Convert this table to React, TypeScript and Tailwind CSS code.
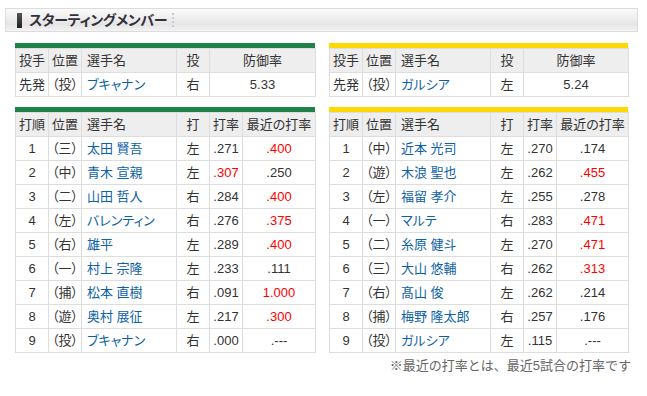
import React from "react";

type Batter = { no: number; pos: string; name: string; hand: string; avg: string; recent: string; avgRed?: boolean; recentRed?: boolean };
type Pitcher = { role: string; pos: string; name: string; hand: string; era: string };

const homePitcher: Pitcher = { role: "先発", pos: "（投）", name: "ブキャナン", hand: "右", era: "5.33" };
const awayPitcher: Pitcher = { role: "先発", pos: "（投）", name: "ガルシア", hand: "左", era: "5.24" };

const homeBatters: Batter[] = [
  { no: 1, pos: "（三）", name: "太田 賢吾", hand: "左", avg: ".271", recent: ".400", recentRed: true },
  { no: 2, pos: "（中）", name: "青木 宣親", hand: "左", avg: ".307", recent: ".250", avgRed: true },
  { no: 3, pos: "（二）", name: "山田 哲人", hand: "右", avg: ".284", recent: ".400", recentRed: true },
  { no: 4, pos: "（左）", name: "バレンティン", hand: "右", avg: ".276", recent: ".375", recentRed: true },
  { no: 5, pos: "（右）", name: "雄平", hand: "左", avg: ".289", recent: ".400", recentRed: true },
  { no: 6, pos: "（一）", name: "村上 宗隆", hand: "左", avg: ".233", recent: ".111" },
  { no: 7, pos: "（捕）", name: "松本 直樹", hand: "右", avg: ".091", recent: "1.000", recentRed: true },
  { no: 8, pos: "（遊）", name: "奥村 展征", hand: "左", avg: ".217", recent: ".300", recentRed: true },
  { no: 9, pos: "（投）", name: "ブキャナン", hand: "右", avg: ".000", recent: ".---" },
];

const awayBatters: Batter[] = [
  { no: 1, pos: "（中）", name: "近本 光司", hand: "左", avg: ".270", recent: ".174" },
  { no: 2, pos: "（遊）", name: "木浪 聖也", hand: "左", avg: ".262", recent: ".455", recentRed: true },
  { no: 3, pos: "（左）", name: "福留 孝介", hand: "左", avg: ".255", recent: ".278" },
  { no: 4, pos: "（一）", name: "マルテ", hand: "右", avg: ".283", recent: ".471", recentRed: true },
  { no: 5, pos: "（二）", name: "糸原 健斗", hand: "左", avg: ".270", recent: ".471", recentRed: true },
  { no: 6, pos: "（三）", name: "大山 悠輔", hand: "右", avg: ".262", recent: ".313", recentRed: true },
  { no: 7, pos: "（右）", name: "髙山 俊", hand: "左", avg: ".262", recent: ".214" },
  { no: 8, pos: "（捕）", name: "梅野 隆太郎", hand: "右", avg: ".257", recent: ".176" },
  { no: 9, pos: "（投）", name: "ガルシア", hand: "左", avg: ".115", recent: ".---" },
];

const th = "h-[24px] border border-[#dddddd] bg-[#eeeeee] font-normal text-center p-0";
const td = "h-[24px] border border-[#dddddd] text-center p-0";

function PitcherTable({ p, bar, last }: { p: Pitcher; bar: string; last: number }) {
  return (
    <div>
      <div className={`h-[5px] ${bar}`} />
      <table className="table-fixed border-collapse w-full">
        <colgroup>
          <col className="w-[33px]" />
          <col className="w-[33px]" />
          <col className="w-[95px]" />
          <col className="w-[33px]" />
          <col style={{ width: last }} />
        </colgroup>
        <thead>
          <tr>
            <th className={th}>投手</th>
            <th className={th}>位置</th>
            <th className={`${th} !text-left pl-[5px]`}>選手名</th>
            <th className={th}>投</th>
            <th className={th}>防御率</th>
          </tr>
        </thead>
        <tbody>
          <tr>
            <td className={td}>{p.role}</td>
            <td className={td}>{p.pos}</td>
            <td className={`${td} !text-left pl-[5px] text-[#0d62a6]`}>{p.name}</td>
            <td className={td}>{p.hand}</td>
            <td className={td}>{p.era}</td>
          </tr>
        </tbody>
      </table>
    </div>
  );
}

function BatterTable({ rows, bar, last }: { rows: Batter[]; bar: string; last: number }) {
  return (
    <div>
      <div className={`h-[5px] ${bar}`} />
      <table className="table-fixed border-collapse w-full">
        <colgroup>
          <col className="w-[33px]" />
          <col className="w-[33px]" />
          <col className="w-[95px]" />
          <col className="w-[33px]" />
          <col className="w-[33px]" />
          <col style={{ width: last }} />
        </colgroup>
        <thead>
          <tr>
            <th className={th}>打順</th>
            <th className={th}>位置</th>
            <th className={`${th} !text-left pl-[5px]`}>選手名</th>
            <th className={th}>打</th>
            <th className={th}>打率</th>
            <th className={th}>最近の打率</th>
          </tr>
        </thead>
        <tbody>
          {rows.map((r) => (
            <tr key={r.no}>
              <td className={td}>{r.no}</td>
              <td className={td}>{r.pos}</td>
              <td className={`${td} !text-left pl-[5px] text-[#0d62a6] whitespace-nowrap`}>{r.name}</td>
              <td className={td}>{r.hand}</td>
              <td className={`${td} ${r.avgRed ? "text-[#ff0000]" : ""}`}>{r.avg}</td>
              <td className={`${td} ${r.recentRed ? "text-[#ff0000]" : ""}`}>{r.recent}</td>
            </tr>
          ))}
        </tbody>
      </table>
    </div>
  );
}

export default function App() {
  return (
    <div className="w-[647px] h-[396px] bg-white text-[13px] leading-none text-[#333333] font-['Liberation_Sans','Noto_Sans_CJK_JP',sans-serif] [font-feature-settings:'palt'] overflow-hidden">
      {/* title bar */}
      <div className="ml-[5px] mt-[8px] w-[633px] h-[24px] border border-[#dcdcdc] bg-linear-to-b from-[#fbfbfb] via-[#e5e5e5] via-70% to-[#f3f3f3] flex items-center">
        <div className="ml-[11px] w-[5px] h-[15px] bg-linear-to-b from-[#555555] to-[#222222]" />
        <div className="ml-[7px] text-[14px] font-bold text-[#33303a] tracking-[-0.3px]">スターティングメンバー</div>
        <div className="ml-[5px] flex flex-col gap-[2px]">
          <span className="w-[2px] h-[2px] bg-[#cccccc]" />
          <span className="w-[2px] h-[2px] bg-[#cccccc]" />
          <span className="w-[2px] h-[2px] bg-[#cccccc]" />
          <span className="w-[2px] h-[2px] bg-[#cccccc]" />
        </div>
      </div>

      <div className="mt-[11px] ml-[15px] flex gap-[14px]">
        <div className="w-[300px] flex flex-col gap-[10px]">
          <PitcherTable p={homePitcher} bar="bg-[#1e8149]" last={106} />
          <BatterTable rows={homeBatters} bar="bg-[#1e8149]" last={73} />
        </div>
        <div className="w-[299px] flex flex-col gap-[10px]">
          <PitcherTable p={awayPitcher} bar="bg-[#ffd800]" last={105} />
          <BatterTable rows={awayBatters} bar="bg-[#ffd800]" last={72} />
        </div>
      </div>

      <div className="w-[631px] mt-[6px] text-right text-[13px] text-[#666666] [font-feature-settings:normal]">※最近の打率とは、最近5試合の打率です</div>
    </div>
  );
}
